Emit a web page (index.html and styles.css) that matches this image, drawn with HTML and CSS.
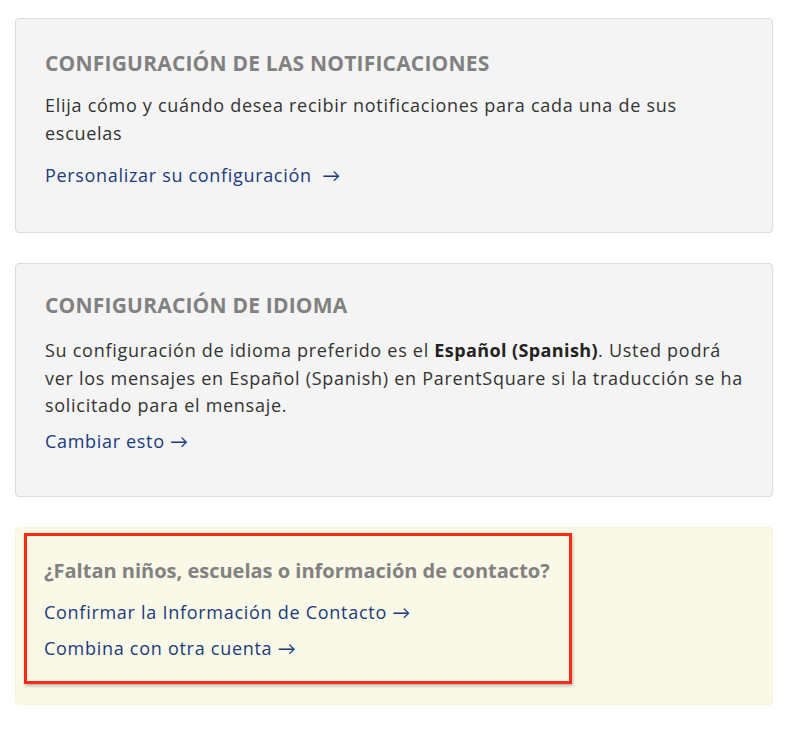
FILE: index.html
```html
<!DOCTYPE html>
<html lang="es">
<head>
<meta charset="utf-8">
<title>Configuración</title>
<link rel="stylesheet" href="styles.css">
</head>
<body>
<main class="page">
  <section class="card card-notify">
    <h2 class="card-title">CONFIGURACIÓN DE LAS NOTIFICACIONES</h2>
    <p class="card-text">Elija cómo y cuándo desea recibir notificaciones para cada una de sus escuelas</p>
    <a class="card-link" href="#">Personalizar su configuración&nbsp; →</a>
  </section>
  <section class="card card-lang">
    <h2 class="card-title">CONFIGURACIÓN DE IDIOMA</h2>
    <p class="card-text">Su configuración de idioma preferido es el <strong>Español (Spanish)</strong>. Usted podrá ver los mensajes en Español (Spanish) en ParentSquare si la traducción se ha solicitado para el mensaje.</p>
    <a class="card-link" href="#">Cambiar esto →</a>
  </section>
  <section class="card card-notice">
    <div class="highlight">
      <h3 class="notice-title">¿Faltan niños, escuelas o información de contacto?</h3>
      <a class="notice-link" href="#">Confirmar la Información de Contacto →</a>
      <a class="notice-link" href="#">Combina con otra cuenta →</a>
    </div>
  </section>
</main>
</body>
</html>
```

FILE: styles.css
```css
html, body {
  margin: 0;
  padding: 0;
  background: #ffffff;
}
body {
  font-family: "Open Sans", Lato, Arial, sans-serif;
  color: #333333;
}
.page {
  padding: 18px 12px 0 15px;
  display: flex;
  flex-direction: column;
  gap: 30px;
}
.card {
  background: #f4f4f4;
  border: 1px solid #dddddd;
  border-radius: 4px;
  padding: 32px 29px 43px 29px;
  display: flex;
  flex-direction: column;
  align-items: flex-start;
}
.card-title {
  margin: 0 0 16px 0;
  font-size: 21px;
  line-height: 24px;
  font-weight: 700;
  letter-spacing: 0.2px;
  color: #818181;
}
.card-text {
  margin: 0 0 14px 0;
  font-size: 18px;
  line-height: 28px;
  letter-spacing: 0.72px;
  max-width: 700px;
}
.card-text strong {
  font-weight: 700;
  letter-spacing: 0.4px;
  color: #222222;
}
.card-link {
  font-size: 18px;
  line-height: 28px;
  letter-spacing: 0.68px;
  color: #1b3b7e;
  text-decoration: none;
}
.card-lang {
  padding: 29px 29px 41px 29px;
}
.card-lang .card-title {
  margin-bottom: 20px;
}
.card-lang .card-text {
  line-height: 27.5px;
  margin-bottom: 7px;
}
.card-notice {
  background: #faf8e6;
  border-color: #f5f2de;
  padding: 5px 0 20px 8px;
}
.highlight {
  width: 522px;
  border: 3px solid #fd2a13;
  box-shadow: 1px 2px 3px rgba(0, 0, 0, 0.25);
  padding: 22px 3px 15px 17px;
  display: flex;
  flex-direction: column;
  align-items: flex-start;
}
.notice-title {
  margin: 0 0 10px 0;
  font-size: 20px;
  line-height: 26px;
  font-weight: 700;
  white-space: nowrap;
  color: #818181;
}
.notice-link {
  font-size: 18px;
  line-height: 36px;
  letter-spacing: 0.72px;
  color: #1b3b7e;
  text-decoration: none;
}
```
